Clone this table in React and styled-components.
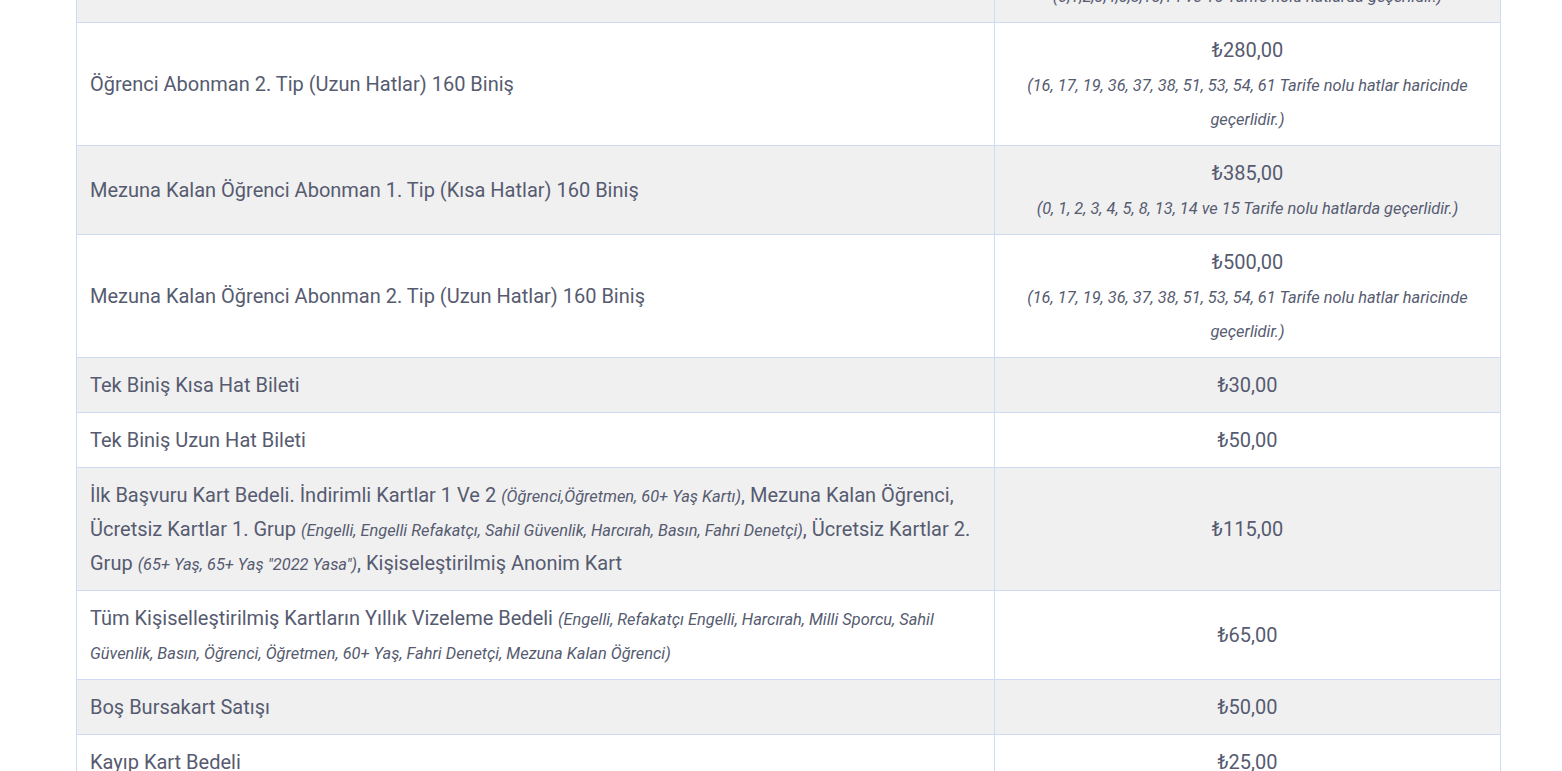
import React from 'react'
import styled, { createGlobalStyle } from 'styled-components'

const GlobalStyle = createGlobalStyle`
  html, body {
    margin: 0;
    padding: 0;
    background: #ffffff;
    overflow: hidden;
  }
  body {
    font-family: Roboto, "Liberation Sans", Arial, sans-serif;
    color: #565b70;
  }
`;

const Page = styled.div`
  padding-left: 76px;
  margin-top: -67px;
`;

const PriceTable = styled.table`
  width: 1425px;
  border-collapse: collapse;
  table-layout: fixed;
  font-size: 20px;
  line-height: 34px;
  color: #565b70;
`;

const Row = styled.tr`
  background-color: ${(p) => (p.$striped ? '#f0f0f0' : '#ffffff')};
`;

const Cell = styled.td`
  border: 1px solid #cfdbf4;
  padding: 10px 13px;
  vertical-align: middle;
`;

const NameCell = styled(Cell)`
  width: 918px;
  box-sizing: border-box;
  text-align: left;
`;

const PriceCell = styled(Cell)`
  text-align: center;
`;

const Note = styled.em`
  font-size: 16.4px;
  line-height: 1;
  font-style: italic;
`;

const rows = [
  {
    name: 'Öğrenci Abonman 1. Tip (Kısa Hatlar) 160 Biniş',
    price: '₺175,00',
    note: '(0,1,2,3,4,5,8,13,14 ve 15 Tarife nolu hatlarda geçerlidir.)',
  },
  {
    name: 'Öğrenci Abonman 2. Tip (Uzun Hatlar) 160 Biniş',
    price: '₺280,00',
    note: '(16, 17, 19, 36, 37, 38, 51, 53, 54, 61 Tarife nolu hatlar haricinde geçerlidir.)',
  },
  {
    name: 'Mezuna Kalan Öğrenci Abonman 1. Tip (Kısa Hatlar) 160 Biniş',
    price: '₺385,00',
    note: '(0, 1, 2, 3, 4, 5, 8, 13, 14 ve 15 Tarife nolu hatlarda geçerlidir.)',
  },
  {
    name: 'Mezuna Kalan Öğrenci Abonman 2. Tip (Uzun Hatlar) 160 Biniş',
    price: '₺500,00',
    note: '(16, 17, 19, 36, 37, 38, 51, 53, 54, 61 Tarife nolu hatlar haricinde geçerlidir.)',
  },
  { name: 'Tek Biniş Kısa Hat Bileti', price: '₺30,00' },
  { name: 'Tek Biniş Uzun Hat Bileti', price: '₺50,00' },
  {
    name: (
      <>
        İlk Başvuru Kart Bedeli. İndirimli Kartlar 1 Ve 2 <Note>(Öğrenci,Öğretmen, 60+ Yaş Kartı)</Note>, Mezuna Kalan Öğrenci,
        Ücretsiz Kartlar 1. Grup <Note>(Engelli, Engelli Refakatçı, Sahil Güvenlik, Harcırah, Basın, Fahri Denetçi)</Note>, Ücretsiz Kartlar 2.
        Grup <Note>(65+ Yaş, 65+ Yaş "2022 Yasa")</Note>, Kişiseleştirilmiş Anonim Kart
      </>
    ),
    price: '₺115,00',
  },
  {
    name: (
      <>
        Tüm Kişiselleştirilmiş Kartların Yıllık Vizeleme Bedeli <Note>(Engelli, Refakatçı Engelli, Harcırah, Milli Sporcu, Sahil Güvenlik, Basın, Öğrenci, Öğretmen, 60+ Yaş, Fahri Denetçi, Mezuna Kalan Öğrenci)</Note>
      </>
    ),
    price: '₺65,00',
  },
  { name: 'Boş Bursakart Satışı', price: '₺50,00' },
  { name: 'Kayıp Kart Bedeli', price: '₺25,00' },
  { name: 'Hasarlı Kart Değişim Bedeli', price: '₺25,00' },
];

export default function App() {
  return (
    <>
      <GlobalStyle />
      <Page>
        <PriceTable>
          <tbody>
            {rows.map((row, index) => (
              <Row key={index} $striped={index % 2 === 0}>
                <NameCell>{row.name}</NameCell>
                <PriceCell>
                  {row.price}
                  {row.note && (
                    <>
                      <br />
                      <Note>{row.note}</Note>
                    </>
                  )}
                </PriceCell>
              </Row>
            ))}
          </tbody>
        </PriceTable>
      </Page>
    </>
  );
}
